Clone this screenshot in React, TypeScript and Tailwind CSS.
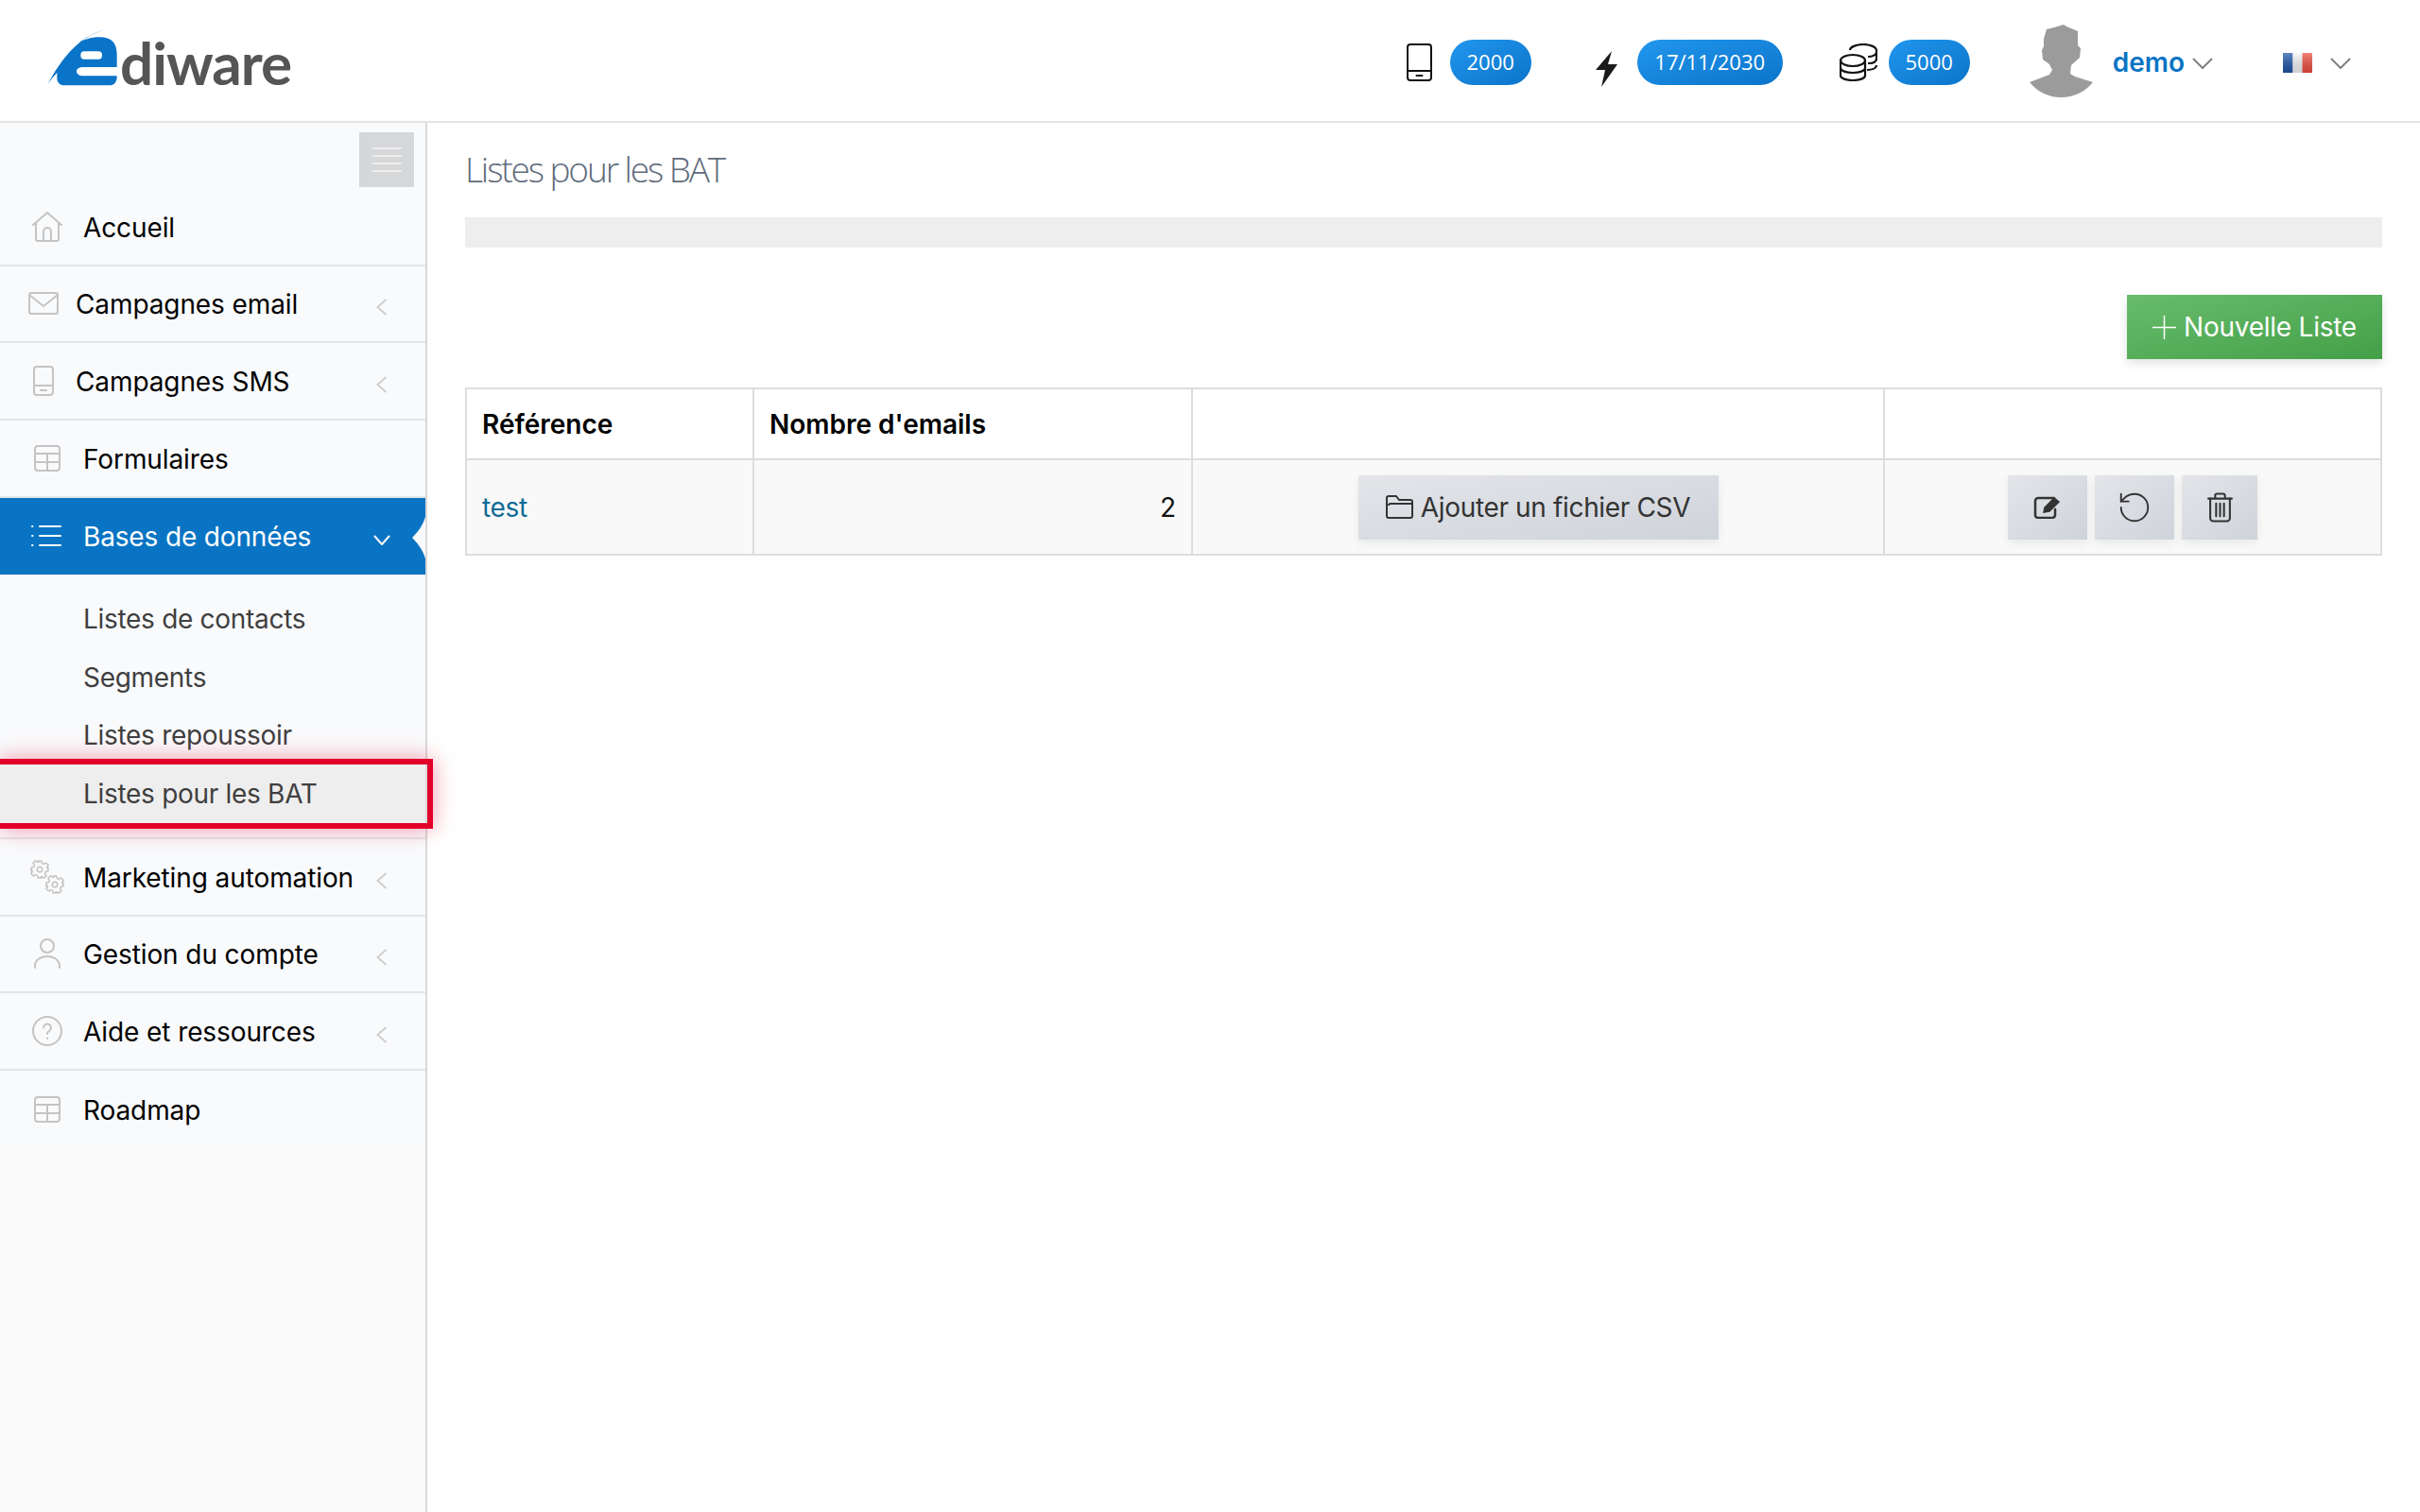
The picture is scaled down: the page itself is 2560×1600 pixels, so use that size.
import React from "react";
import { RotateCcw } from "lucide-react";

type IconProps = { className?: string };

const Line = ({ className, w, h, children }: IconProps & { w: number; h: number; children: React.ReactNode }) => (
  <svg width={w} height={h} viewBox={`0 0 ${w} ${h}`} fill="none" stroke="currentColor" strokeWidth="2" strokeLinecap="round" strokeLinejoin="round" className={className}>
    {children}
  </svg>
);

const HomeI = ({ className }: IconProps) => (
  <Line w={32} h={32} className={className}>
    <path d="M1 14 16 1l15 13M4 12v17a2 2 0 0 0 2 2h20a2 2 0 0 0 2-2V12" />
    <path d="M12 31V21a4 4 0 0 1 8 0v10" />
  </Line>
);
const MailI = ({ className }: IconProps) => (
  <Line w={32} h={24} className={className}>
    <rect x="1" y="1" width="30" height="22" rx="2" />
    <path d="M1 3l15 12L31 3" />
  </Line>
);
const PhoneI = ({ className, w = 22, h = 32 }: IconProps & { w?: number; h?: number }) => (
  <Line w={w} h={h} className={className}>
    <rect x="1" y="1" width={w - 2} height={h - 2} rx="3" />
    <path d={`M1 ${h - 11}H${w - 1}M${w / 2 - 3} ${h - 6}h6`} />
  </Line>
);
const TableI = ({ className }: IconProps) => (
  <Line w={28} h={28} className={className}>
    <rect x="1" y="1" width="26" height="26" rx="3" />
    <path d="M1 9h26M1 18h26M14 9v18" />
  </Line>
);
const ListI = ({ className }: IconProps) => (
  <Line w={32} h={22} className={className}>
    <path d="M1 1h.5M1 11h.5M1 21h.5M9 1h22M9 11h22M9 21h22" />
  </Line>
);
const Gear = ({ cx, cy }: { cx: number; cy: number }) => (
  <g transform={`translate(${cx} ${cy})`}>
    <circle r="2.8" />
    <path d="M-1.8-9h3.6l.6 2.6 1.9.8 2.3-1.4 2.5 2.5-1.4 2.3.8 1.9L9-1.8v3.6l-2.6.6-.8 1.9 1.4 2.3-2.5 2.5-2.3-1.4-1.9.8L1.800 9h-3.6l-.6-2.6-1.9-.8-2.3 1.4-2.5-2.5 1.4-2.3-.8-1.900L-9 1.800v-3.6l2.600-.6.8-1.900-1.4-2.300 2.500-2.500 2.300 1.400 1.900-.8z" />
  </g>
);
const GearsI = ({ className }: IconProps) => (
  <Line w={36} h={36} className={className}>
    <g strokeWidth="1.5">
      <Gear cx={10} cy={10} />
      <Gear cx={26} cy={26} />
    </g>
  </Line>
);
const UserI = ({ className }: IconProps) => (
  <Line w={28} h={32} className={className}>
    <circle cx="14" cy="8" r="7" />
    <path d="M1 31v-2c0-6 6-10 13-10s13 4 13 10v2" />
  </Line>
);
const HelpI = ({ className }: IconProps) => (
  <Line w={32} h={32} className={className}>
    <circle cx="16" cy="16" r="15" />
    <path d="M12 12.5a4 4 0 1 1 6 3.5c-1.3.8-2 1.5-2 3M16 23.5v.5" />
  </Line>
);
const ChevronLeft = ({ className }: IconProps) => (
  <svg width="12" height="18" viewBox="0 0 12 18" fill="none" stroke="currentColor" strokeWidth="2" className={className}>
    <path d="M10.5 1 1.5 9l9 8" />
  </svg>
);
const ChevronDown = ({ className, w = 22, h = 12 }: IconProps & { w?: number; h?: number }) => (
  <svg width={w} height={h} viewBox={`0 0 ${w} ${h}`} fill="none" stroke="currentColor" strokeWidth="2" className={className}>
    <path d={`M1 1l${w / 2 - 1} ${h - 2} ${w / 2 - 1}-${h - 2}`} />
  </svg>
);

const Logo = () => (
  <div className="flex items-start">
    <svg width="74" height="60" viewBox="30 30 220 180" className="shrink-0">
      <path
        fill="#0a74c9"
        d="M215 30C150 50 95 85 30 205 40 190 50 178 60 168V185C60 200 70 208 85 208H225C242 208 250 198 250 180V178H145C128 178 122 170 122 164 122 155 130 150 145 150H250V110C250 75 235 55 195 55 170 55 140 62 120 80 150 55 180 40 215 30Z"
      />
      <rect x="135" y="100" width="68" height="25" rx="12" fill="#fff" />
    </svg>
    <span className="ml-[3px] mt-[3px] font-['Lato',sans-serif] text-[62px] font-bold leading-[64px] tracking-[-1px] text-[#555]">diware</span>
  </div>
);

const Pill = ({ children, className }: { children: React.ReactNode; className: string }) => (
  <span className={`flex h-[48px] items-center justify-center rounded-full bg-gradient-to-br from-[#2196ee] to-[#0a74c9] font-['Open_Sans',sans-serif] text-[22px] text-white ${className}`}>
    {children}
  </span>
);

const Header = () => (
  <header className="flex h-[130px] shrink-0 items-center border-b-2 border-[#e4e4e4] bg-white pl-[50px]">
    <Logo />
    <div className="ml-auto flex items-center pt-[3px]">
      <PhoneI w={27} h={40} className="text-[#111]" />
      <Pill className="ml-[19px] w-[86px]">2000</Pill>
      <svg width="23" height="38" viewBox="0 0 23 38" className="ml-[68px] mt-[14px]">
        <path fill="#1a1a1a" d="M17 0 13 14h10L6 38l4-18H0Z" />
      </svg>
      <Pill className="ml-[21px] w-[154px]">17/11/2030</Pill>
      <svg width="40" height="40" viewBox="0 0 40 40" fill="none" stroke="#111" strokeWidth="2.2" className="ml-[60px]">
        <ellipse cx="14" cy="18" rx="13" ry="6" />
        <path d="M1 18v16c0 3 6 5 13 5s13-2 13-5V18M1 26c0 3 6 5 13 5s13-2 13-5" />
        <path d="M11 7c0-3 6-6 14-6s14 3 14 6v9c0 3-3 5-9 5M30 14c5 0 9-2 9-5M29 28c6 0 10-2 10-5" />
      </svg>
      <Pill className="ml-[12px] w-[86px]">5000</Pill>
      <svg width="67" height="77" viewBox="0 0 67 77" className="-mt-[2px] ml-[63px]">
        <path fill="#9b9b9b" d="M36 0 26 3l-8 2-3 10v8l-2 4 1 10 7 5 3 6-3 5L0 61c8 10 20 16 33 16 14 0 26-6 34-16l-19-6-5-3 1-9 9-8 1-10-3-3V7L39 2Z" />
      </svg>
      <span className="ml-[21px] font-['Inter',sans-serif] text-[28px] font-semibold leading-none text-[#0a74c4]">demo</span>
      <ChevronDown className="ml-[8px] mt-[2px] text-[#808080]" />
      <svg width="31" height="21" viewBox="0 0 31 21" className="ml-[74px] mt-[2px]">
        <defs>
          <linearGradient id="sheen" x1="0" y1="0" x2="0" y2="1">
            <stop offset="0" stopColor="#fff" stopOpacity=".3" />
            <stop offset="1" stopColor="#000" stopOpacity=".15" />
          </linearGradient>
        </defs>
        <rect width="10.500" height="21" fill="#1f56a8" />
        <rect x="10.500" width="10" height="21" fill="#f4f6f8" />
        <rect x="20.500" width="10.500" height="21" fill="#ee5040" />
        <rect width="31" height="21" fill="url(#sheen)" />
      </svg>
      <ChevronDown className="ml-[19px] mr-[73px] mt-[2px] text-[#808080]" />
    </div>
  </header>
);

const rowText = "pt-[2px] text-[28px] leading-none tracking-[-0.1px] text-black";

const Row = ({
  slot,
  icon,
  label,
  chevron = false,
  border = true,
}: {
  slot: string;
  icon: React.ReactNode;
  label: string;
  chevron?: boolean;
  border?: boolean;
}) => (
  <div className={`flex h-[81.67px] items-center ${border ? "border-b-2 border-[#e3e5e8]" : ""}`}>
    <span className={`flex shrink-0 items-center ${slot}`}>{icon}</span>
    <span className={rowText}>{label}</span>
    {chevron && <ChevronLeft className="ml-auto mr-[40px] mt-[8px] text-[#cfcfcf]" />}
  </div>
);

const subItem = "flex h-[61.67px] items-center pl-[88px] text-[28px] leading-none tracking-[-0.3px] text-[#3f3f3f]";

const Sidebar = () => (
  <aside className="w-[452px] shrink-0 border-r-2 border-[#d9d9d9] bg-[#fafafa]">
    <nav className="bg-[#f9fafc] pb-[2px]">
      <div className="flex h-[70px] justify-end pr-[12px] pt-[10px]">
        <div className="flex h-[58px] w-[58px] flex-col items-center justify-center gap-[6.3px] bg-[#d6d7d9]">
          <span className="h-[2px] w-[31px] bg-[#eeeeee]" />
          <span className="h-[2px] w-[31px] bg-[#eeeeee]" />
          <span className="h-[2px] w-[31px] bg-[#eeeeee]" />
          <span className="h-[2px] w-[31px] bg-[#eeeeee]" />
        </div>
      </div>
      <Row slot="w-[88px] pl-[34px]" icon={<HomeI className="text-[#c4c4c4]" />} label="Accueil" />
      <Row slot="w-[80px] pl-[30px]" icon={<MailI className="text-[#c4c4c4]" />} label="Campagnes email" chevron />
      <Row slot="w-[80px] pl-[35px]" icon={<PhoneI className="text-[#c4c4c4]" />} label="Campagnes SMS" chevron />
      <Row slot="w-[88px] pl-[36px]" icon={<TableI className="text-[#c4c4c4]" />} label="Formulaires" />
      <div className="relative flex h-[81.67px] items-center bg-[#0a74c4] text-white">
        <span className="flex w-[88px] shrink-0 items-center pl-[33px]">
          <ListI />
        </span>
        <span className="pt-[2px] text-[28px] leading-none tracking-[-0.15px]">Bases de données</span>
        <ChevronDown w={18} h={11} className="ml-auto mr-[37px] mt-[8px]" />
        <svg width="14" height="44" viewBox="0 0 14 44" className="absolute right-0 top-[20px]">
          <path fill="#f9fafc" d="M14 0C11 10 5 17 0 22c5 5 11 12 14 22Z" />
        </svg>
      </div>
      <div className="border-b-2 border-[#e3e5e8] pb-[15px] pt-[16px]">
        <div className={subItem}>Listes de contacts</div>
        <div className={subItem}>Segments</div>
        <div className={subItem}>Listes repoussoir</div>
        <div className={`relative bg-[#eeeeee] ${subItem}`}>
          Listes pour les BAT
          <span className="absolute -bottom-[6px] -right-[8px] -top-[6px] left-0 border-[6px] border-l-0 border-[#e2002a] shadow-[0_0_22px_rgba(226,0,42,0.4)]" />
        </div>
      </div>
      <Row slot="w-[88px] pl-[32px]" icon={<GearsI className="text-[#c4c4c4]" />} label="Marketing automation" chevron />
      <Row slot="w-[88px] pl-[36px]" icon={<UserI className="text-[#c4c4c4]" />} label="Gestion du compte" chevron />
      <Row slot="w-[88px] pl-[34px]" icon={<HelpI className="text-[#c4c4c4]" />} label="Aide et ressources" chevron />
      <Row slot="w-[88px] pl-[36px]" icon={<TableI className="text-[#c4c4c4]" />} label="Roadmap" border={false} />
    </nav>
  </aside>
);

const greyBtn =
  "flex h-[68px] items-center justify-center bg-gradient-to-br from-[#e3e5e9] to-[#cfd3da] shadow-[0_4px_10px_rgba(0,0,0,0.07)]";

const cell = "border-2 border-[#dddddd] px-[16px]";

const Main = () => (
  <main className="min-w-0 flex-1 px-[40px]">
    <h1 className="mt-[19px] h-[61px] font-['Open_Sans',sans-serif] text-[37px] font-light leading-[60px] tracking-[-2.1px] text-[#5f6b7a]">
      Listes pour les BAT
    </h1>
    <div className="mt-[20px] h-[32px] bg-[#eeeeee]" />
    <div className="mt-[50px] flex justify-end">
      <button className="flex h-[68px] w-[270px] items-center justify-center gap-[8px] bg-gradient-to-br from-[#68bc6c] to-[#43a047] text-[28px] leading-none tracking-[-0.25px] text-white shadow-[0_4px_10px_rgba(0,0,0,0.12)]">
        <svg width="25" height="25" viewBox="0 0 25 25" stroke="currentColor" strokeWidth="1.5">
          <path d="M12.500 0v25M0 12.500h25" />
        </svg>
        Nouvelle Liste
      </button>
    </div>
    <table className="mt-[30px] w-full table-fixed border-collapse text-[28px] leading-none">
      <colgroup>
        <col className="w-[304px]" />
        <col className="w-[464px]" />
        <col className="w-[732px]" />
        <col />
      </colgroup>
      <thead>
        <tr className="h-[75px] bg-white">
          <th className={`${cell} text-left font-semibold text-black`}>Référence</th>
          <th className={`${cell} text-left font-semibold text-black`}>Nombre d'emails</th>
          <th className={cell} />
          <th className={cell} />
        </tr>
      </thead>
      <tbody>
        <tr className="h-[101px] bg-[#f9f9f9]">
          <td className={`${cell} tracking-[-0.3px] text-[#0f6b96]`}>test</td>
          <td className={`${cell} text-right text-[#111]`}>2</td>
          <td className={cell}>
            <div className="flex justify-center">
              <button className={`${greyBtn} w-[381px] gap-[6px] tracking-[-0.35px] text-[#333]`}>
                <svg width="31" height="25" viewBox="0 0 31 25" fill="none" stroke="currentColor" strokeWidth="2" strokeLinejoin="round">
                  <path d="M1 22V3a2 2 0 0 1 2-2h8l3 4h12a2 2 0 0 1 2 2v2" />
                  <path d="M1 22a2 2 0 0 0 2 2h23a2 2 0 0 0 2-2V9H5a2 2 0 0 0-2 2" />
                </svg>
                Ajouter un fichier CSV
              </button>
            </div>
          </td>
          <td className={cell}>
            <div className="flex justify-center gap-[8px] text-[#333]">
              <button className={`${greyBtn} w-[84px]`}>
                <svg width="30" height="24" viewBox="0 0 30 24" fill="none" stroke="currentColor" strokeWidth="2.500" strokeLinecap="round">
                  <path d="M22 2H5a3 3 0 0 0-3 3v15a3 3 0 0 0 3 3h15a3 3 0 0 0 3-3v-6" />
                  <path d="M11 17l1-5L22 2l5 4-10 10Z" fill="currentColor" strokeWidth="1.5" />
                </svg>
              </button>
              <button className={`${greyBtn} w-[84px]`}>
                <RotateCcw size={38} strokeWidth={1.2} />
              </button>
              <button className={`${greyBtn} w-[80px]`}>
                <svg width="27" height="32" viewBox="0 0 26 30" fill="none" stroke="currentColor" strokeWidth="2" strokeLinecap="round">
                  <path d="M1 6h24M8 6V3a2 2 0 0 1 2-2h6a2 2 0 0 1 2 2v3" />
                  <path d="M3 6v20a3 3 0 0 0 3 3h14a3 3 0 0 0 3-3V6" />
                  <path d="M9 11v13M13 11v13M17 11v13" />
                </svg>
              </button>
            </div>
          </td>
        </tr>
      </tbody>
    </table>
  </main>
);

export default function App() {
  return (
    <div className="flex h-[1600px] flex-col overflow-hidden bg-white font-['Inter',sans-serif]">
      <Header />
      <div className="flex flex-1">
        <Sidebar />
        <Main />
      </div>
    </div>
  );
}
